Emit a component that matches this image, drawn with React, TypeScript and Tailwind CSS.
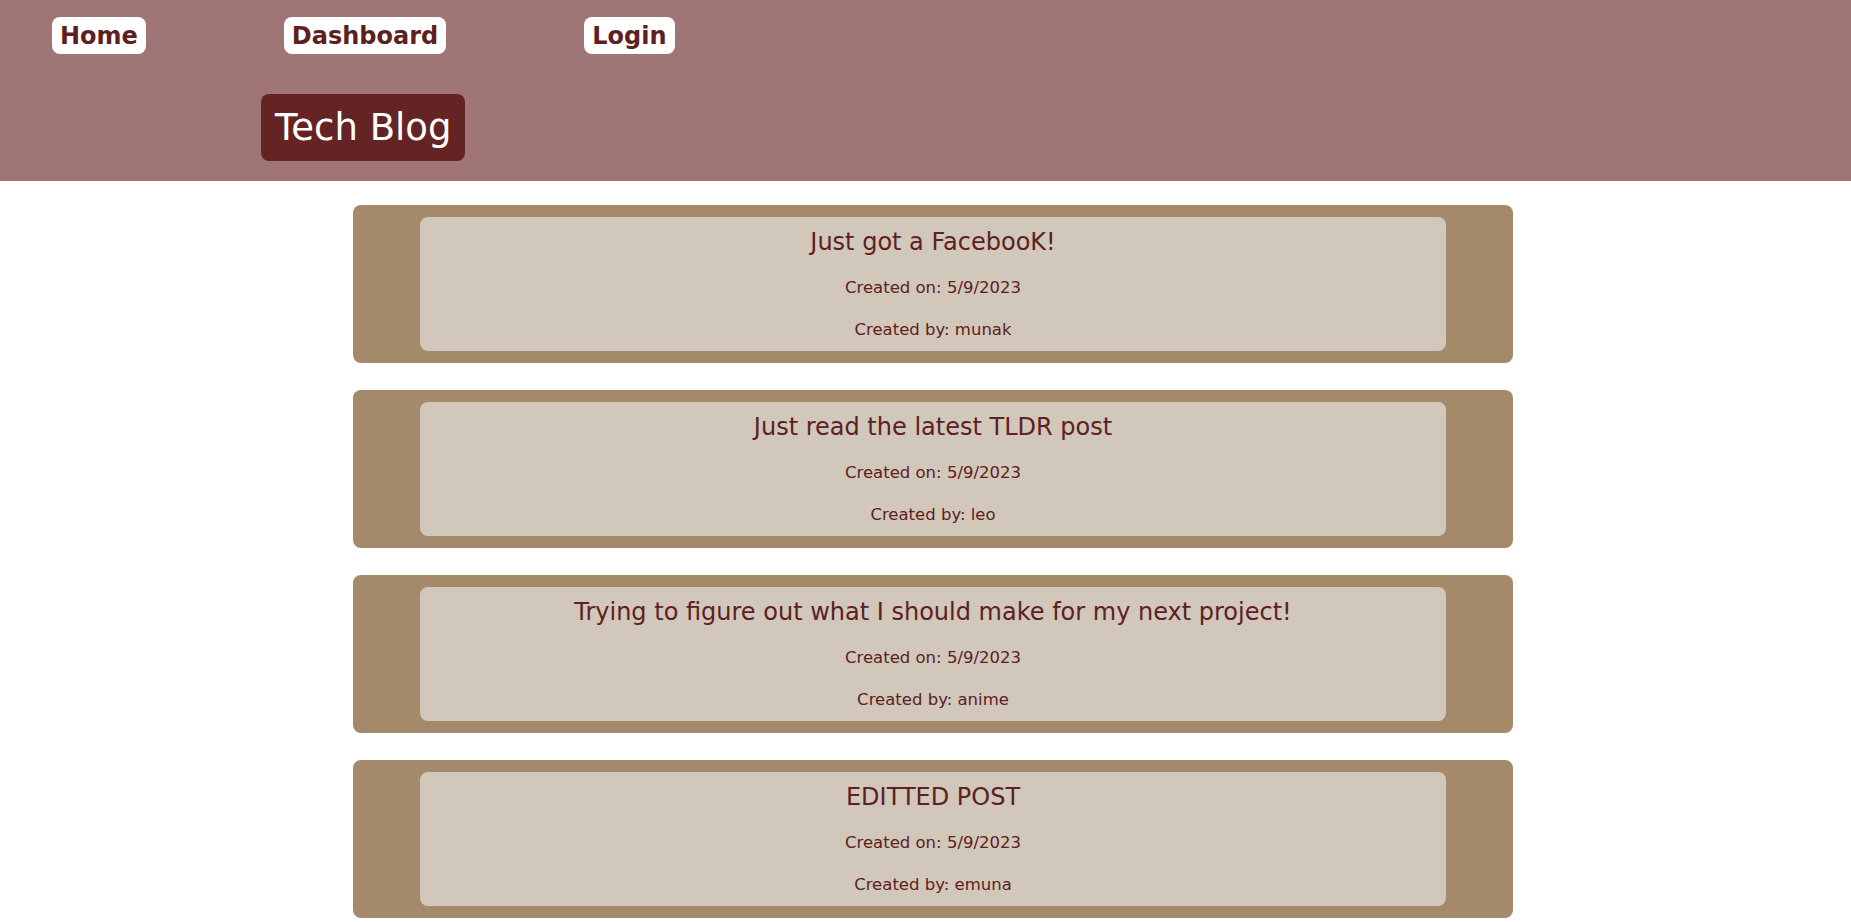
const posts = [
  { title: "Just got a FacebooK!", date: "5/9/2023", user: "munak" },
  { title: "Just read the latest TLDR post", date: "5/9/2023", user: "leo" },
  {
    title: "Trying to figure out what I should make for my next project!",
    date: "5/9/2023",
    user: "anime",
  },
  { title: "EDITTED POST", date: "5/9/2023", user: "emuna" },
];

function NavLink({ label }: { label: string }) {
  return (
    <a
      href="#"
      className="flex h-[37px] items-center rounded-lg bg-white px-2 text-[24px] font-bold text-[#5e1f1f]"
    >
      {label}
    </a>
  );
}

function PostCard({ title, date, user }: { title: string; date: string; user: string }) {
  return (
    <div className="h-[158px] rounded-lg bg-[#a48a6b] px-[67px] pt-3">
      <div className="flex h-[134px] flex-col items-center rounded-lg bg-[#d1c7bb] text-[#5e2020]">
        <h2 className="mt-[10px] text-[24px] leading-[30px]">{title}</h2>
        <p className="mt-[21px] text-[16.5px] leading-[20px]">Created on: {date}</p>
        <p className="mt-[22px] text-[16.5px] leading-[20px]">Created by: {user}</p>
      </div>
    </div>
  );
}

export default function App() {
  return (
    <div
      className="min-h-screen bg-white"
      style={{ fontFamily: '"DejaVu Sans", Tahoma, sans-serif' }}
    >
      <header className="h-[181px] bg-[#a07575] pl-[52px] pt-[17px]">
        <nav className="flex gap-[138px]">
          <NavLink label="Home" />
          <NavLink label="Dashboard" />
          <NavLink label="Login" />
        </nav>
        <div className="ml-[209px] mt-[40px] inline-flex h-[67px] items-center rounded-lg bg-[#652424] px-[14px] text-[37px] text-white">
          Tech Blog
        </div>
      </header>
      <main className="ml-[353px] flex w-[1160px] flex-col gap-[27px] pt-6">
        {posts.map((p) => (
          <PostCard key={p.title} {...p} />
        ))}
      </main>
    </div>
  );
}
